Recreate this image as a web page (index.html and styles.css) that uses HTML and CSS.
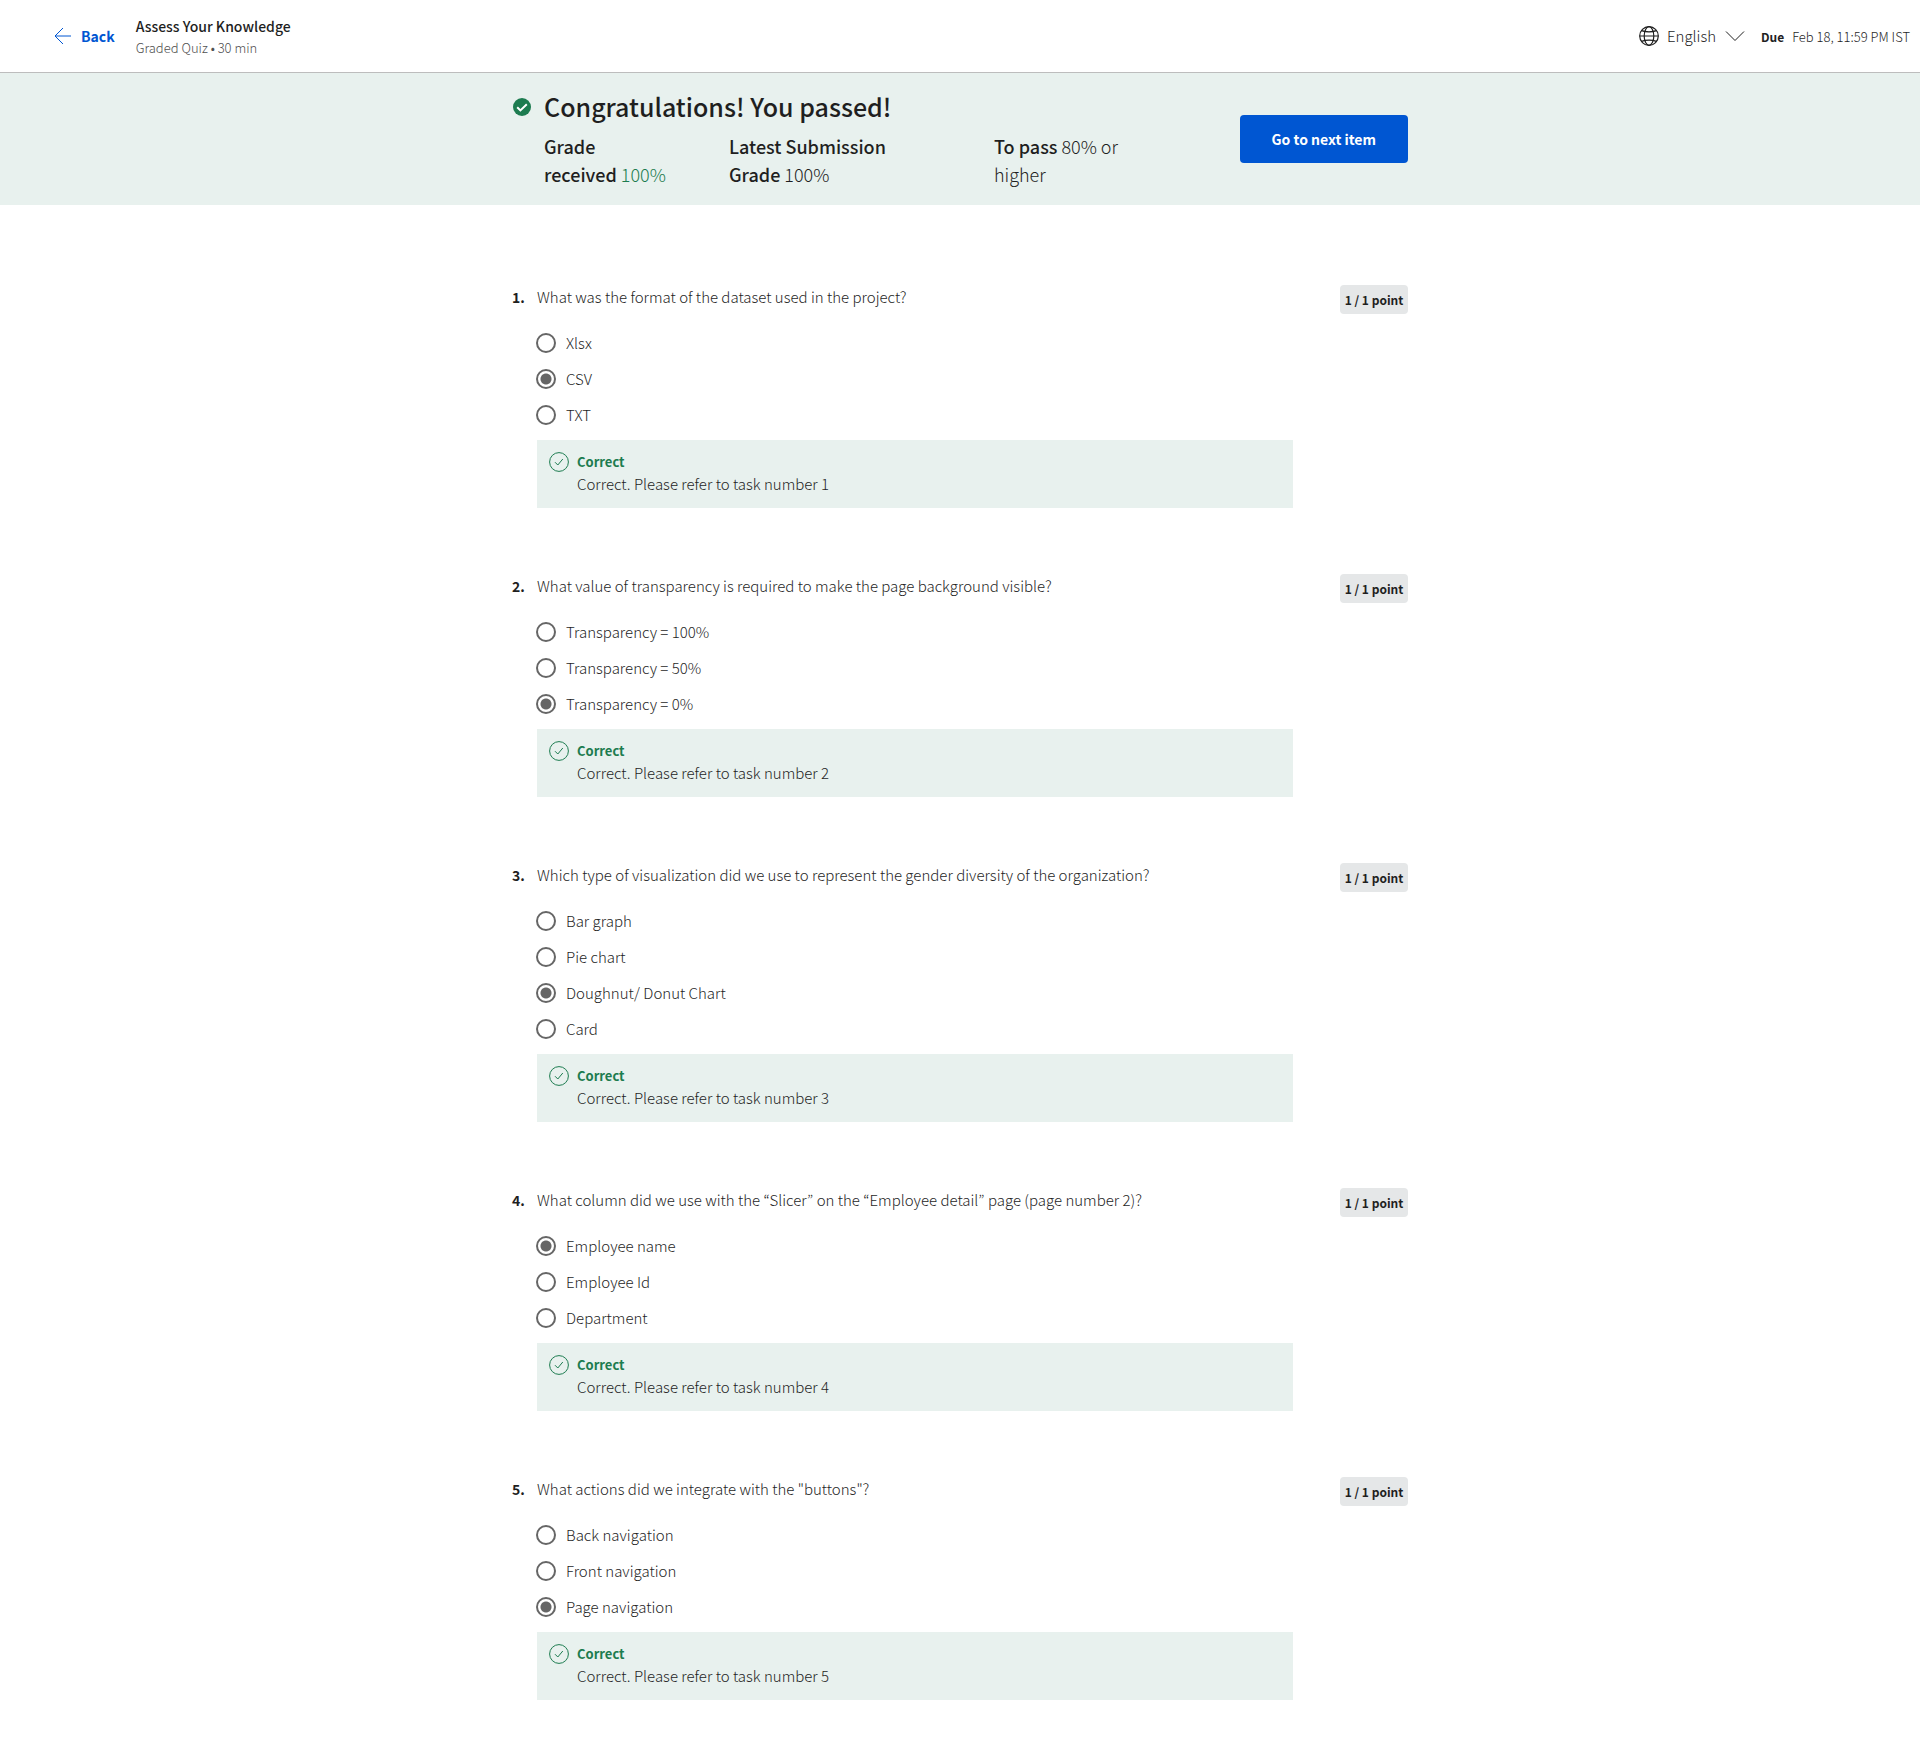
FILE: index.html
```html
<!DOCTYPE html>
<html lang="en">
<head>
<meta charset="utf-8">
<meta name="viewport" content="width=device-width, initial-scale=1">
<title>Assess Your Knowledge</title>
<link rel="stylesheet" href="styles.css">
</head>
<body>
<svg class="sprite" aria-hidden="true">
  <symbol id="check-ring" viewBox="0 0 20 20">
    <circle cx="10" cy="10" r="9.4" fill="none" stroke="currentColor" stroke-width="1"/>
    <path d="M6 10.2l2.8 2.8 5-6" fill="none" stroke="currentColor" stroke-width="1"/>
  </symbol>
</svg>

<header class="topbar">
  <a class="back" href="#">
    <svg class="back-arrow" viewBox="0 0 18 18" aria-hidden="true"><path d="M9 1L1 9l8 8M1 9h16" fill="none" stroke="currentColor" stroke-width="1"/></svg>
    Back
  </a>
  <div class="item-info">
    <h1 class="item-title">Assess Your Knowledge</h1>
    <p class="item-meta">Graded Quiz • 30 min</p>
  </div>
  <div class="topbar-right">
    <label class="language">
      <svg class="globe" viewBox="0 0 20 20" aria-hidden="true"><g fill="none" stroke="currentColor" stroke-width="1.2"><circle cx="10" cy="10" r="9.3"/><ellipse cx="10" cy="10" rx="4.8" ry="9.3"/><path d="M0.7 10h18.6M2.6 4.6c4 1.6 10.800 1.600 14.800 0M2.600 15.400c4-1.600 10.800-1.600 14.800 0"/></g></svg>
      <select class="language-select" aria-label="Language"><option>English</option></select>
      <svg class="chevron" viewBox="0 0 20 12" aria-hidden="true"><path d="M1 1.500l9 9 9-9" fill="none" stroke="currentColor" stroke-width="1"/></svg>
    </label>
    <p class="due"><strong>Due</strong><span>Feb 18, 11:59 PM IST</span></p>
  </div>
</header>

<section class="banner">
  <div class="container banner-inner">
    <svg class="pass-icon" viewBox="0 0 18 18" aria-hidden="true"><circle cx="9" cy="9" r="9" fill="currentColor"/><path d="M4.2 9.2l3.2 3.2 6.4-6.2" fill="none" stroke="#fff" stroke-width="2"/></svg>
    <div class="result">
      <h2 class="result-title">Congratulations! You passed!</h2>
      <div class="grades">
        <p class="grade-received"><strong>Grade received</strong> <span class="passed">100%</span></p>
        <p class="grade-latest"><strong>Latest Submission Grade</strong> 100%</p>
        <p class="grade-needed"><strong>To pass</strong> 80% or higher</p>
      </div>
    </div>
    <button class="next" type="button">Go to next item</button>
  </div>
</section>

<main class="container questions">
  <section class="question">
    <span class="number">1.</span>
    <div class="body">
      <p class="prompt" id="q1">What was the format of the dataset used in the project?</p>
      <div class="options" role="radiogroup" aria-labelledby="q1">
        <label class="option"><input type="radio" name="q1">Xlsx</label>
        <label class="option"><input type="radio" name="q1" checked>CSV</label>
        <label class="option"><input type="radio" name="q1">TXT</label>
      </div>
      <div class="feedback">
        <svg class="feedback-icon" aria-hidden="true"><use href="#check-ring"/></svg>
        <div><p class="verdict">Correct</p><p class="note">Correct. Please refer to task number 1</p></div>
      </div>
    </div>
    <span class="points">1 / 1 point</span>
  </section>

  <section class="question">
    <span class="number">2.</span>
    <div class="body">
      <p class="prompt" id="q2">What value of transparency is required to make the page background visible?</p>
      <div class="options" role="radiogroup" aria-labelledby="q2">
        <label class="option"><input type="radio" name="q2">Transparency = 100%</label>
        <label class="option"><input type="radio" name="q2">Transparency = 50%</label>
        <label class="option"><input type="radio" name="q2" checked>Transparency = 0%</label>
      </div>
      <div class="feedback">
        <svg class="feedback-icon" aria-hidden="true"><use href="#check-ring"/></svg>
        <div><p class="verdict">Correct</p><p class="note">Correct. Please refer to task number 2</p></div>
      </div>
    </div>
    <span class="points">1 / 1 point</span>
  </section>

  <section class="question">
    <span class="number">3.</span>
    <div class="body">
      <p class="prompt" id="q3">Which type of visualization did we use to represent the gender diversity of the organization?</p>
      <div class="options" role="radiogroup" aria-labelledby="q3">
        <label class="option"><input type="radio" name="q3">Bar graph</label>
        <label class="option"><input type="radio" name="q3">Pie chart</label>
        <label class="option"><input type="radio" name="q3" checked>Doughnut/ Donut Chart</label>
        <label class="option"><input type="radio" name="q3">Card</label>
      </div>
      <div class="feedback">
        <svg class="feedback-icon" aria-hidden="true"><use href="#check-ring"/></svg>
        <div><p class="verdict">Correct</p><p class="note">Correct. Please refer to task number 3</p></div>
      </div>
    </div>
    <span class="points">1 / 1 point</span>
  </section>

  <section class="question">
    <span class="number">4.</span>
    <div class="body">
      <p class="prompt" id="q4">What column did we use with the “Slicer” on the “Employee detail” page (page number 2)?</p>
      <div class="options" role="radiogroup" aria-labelledby="q4">
        <label class="option"><input type="radio" name="q4" checked>Employee name</label>
        <label class="option"><input type="radio" name="q4">Employee Id</label>
        <label class="option"><input type="radio" name="q4">Department</label>
      </div>
      <div class="feedback">
        <svg class="feedback-icon" aria-hidden="true"><use href="#check-ring"/></svg>
        <div><p class="verdict">Correct</p><p class="note">Correct. Please refer to task number 4</p></div>
      </div>
    </div>
    <span class="points">1 / 1 point</span>
  </section>

  <section class="question">
    <span class="number">5.</span>
    <div class="body">
      <p class="prompt" id="q5">What actions did we integrate with the "buttons"?</p>
      <div class="options" role="radiogroup" aria-labelledby="q5">
        <label class="option"><input type="radio" name="q5">Back navigation</label>
        <label class="option"><input type="radio" name="q5">Front navigation</label>
        <label class="option"><input type="radio" name="q5" checked>Page navigation</label>
      </div>
      <div class="feedback">
        <svg class="feedback-icon" aria-hidden="true"><use href="#check-ring"/></svg>
        <div><p class="verdict">Correct</p><p class="note">Correct. Please refer to task number 5</p></div>
      </div>
    </div>
    <span class="points">1 / 1 point</span>
  </section>
</main>
</body>
</html>
```

FILE: styles.css
```css
:root {
  --ink: #1f1f1f;
  --muted: #666;
  --green: #1d7c50;
  --mint: #e8f1ee;
  --blue: #0056d2;
}

* {
  box-sizing: border-box;
}

body {
  margin: 0;
  background: #fff;
  color: var(--ink);
  font: 300 15px/24px "Noto Sans CJK KR", "Noto Sans", sans-serif;
}

h1, h2, p {
  margin: 0;
}

strong {
  font-weight: 500;
}

.sprite {
  position: absolute;
  width: 0;
  height: 0;
}

.container {
  width: 100%;
  max-width: 896px;
  margin: 0 auto;
}

/* Top bar */
.topbar {
  display: flex;
  align-items: center;
  min-height: 73px;
  padding: 0 10px 0 54px;
  border-bottom: 1px solid #bdbdbd;
}

.back {
  display: flex;
  align-items: center;
  gap: 9px;
  color: var(--blue);
  font-size: 14px;
  font-weight: 700;
  text-decoration: none;
}

.back-arrow {
  width: 18px;
  height: 18px;
}

.item-info {
  margin-left: 21px;
}

.item-title {
  font-size: 14px;
  font-weight: 500;
  line-height: 24px;
}

.item-meta {
  color: #505050;
  font-size: 13px;
  font-weight: 300;
  line-height: 20px;
}

.topbar-right {
  display: flex;
  align-items: center;
  gap: 16px;
  margin-left: auto;
}

.language {
  display: flex;
  align-items: center;
  gap: 8px;
}

.globe {
  width: 20px;
  height: 20px;
}

.language-select {
  appearance: none;
  padding: 0;
  border: 0;
  background: none;
  color: inherit;
  font: inherit;
}

.chevron {
  width: 20px;
  height: 12px;
}

.due {
  display: flex;
  gap: 8px;
  padding-top: 2px;
  font-size: 13px;
}

.due strong {
  font-size: 12px;
  font-weight: 700;
}

/* Result banner */
.banner {
  background: var(--mint);
}

.banner-inner {
  display: flex;
  align-items: center;
  padding: 17px 0;
}

.pass-icon {
  flex: none;
  align-self: flex-start;
  width: 18px;
  height: 18px;
  margin: 8px 13px 0 1px;
  color: var(--green);
}

.result {
  flex: 1;
}

.result-title {
  font-size: 25px;
  font-weight: 500;
  line-height: 32px;
}

.grades {
  display: flex;
  margin-top: 10px;
  font-size: 18px;
  line-height: 28px;
}

.grade-received {
  width: 128px;
  margin-right: 57px;
}

.grade-latest {
  width: 201px;
  padding-right: 40px;
  margin-right: 64px;
}

.grade-needed {
  width: 150px;
}

.passed {
  color: var(--green);
}

.next {
  height: 48px;
  padding: 0 32px;
  border: 0;
  border-radius: 4px;
  background: var(--blue);
  color: #fff;
  font: inherit;
  font-size: 14px;
  font-weight: 700;
}

/* Questions */
.questions {
  padding: 80px 0 64px;
}

.question {
  display: grid;
  grid-template-columns: 25px 1fr auto;
  align-items: start;
}

.question + .question {
  margin-top: 66px;
}

.number {
  font-size: 14px;
  font-weight: 700;
}

.body {
  margin-right: 47px;
}

.options {
  padding: 16px 0 7px;
}

.option {
  display: flex;
  align-items: center;
  gap: 10px;
  height: 36px;
}

.option input {
  appearance: none;
  flex: none;
  width: 20px;
  height: 20px;
  margin: 0 0 0 -1px;
  border: 2px solid var(--muted);
  border-radius: 50%;
}

.option input:checked {
  background: radial-gradient(circle, var(--muted) 5px, transparent 6px);
}

.feedback {
  display: flex;
  gap: 8px;
  padding: 12px;
  background: var(--mint);
}

.feedback-icon {
  flex: none;
  width: 20px;
  height: 20px;
  color: var(--green);
}

.verdict {
  color: var(--green);
  font-size: 13px;
  font-weight: 700;
  line-height: 20px;
}

.points {
  min-width: 68px;
  padding: 5px 4px 4px;
  border-radius: 4px;
  background: #e5e7e8;
  font-size: 12px;
  font-weight: 700;
  line-height: 20px;
  text-align: center;
  white-space: nowrap;
}
```
